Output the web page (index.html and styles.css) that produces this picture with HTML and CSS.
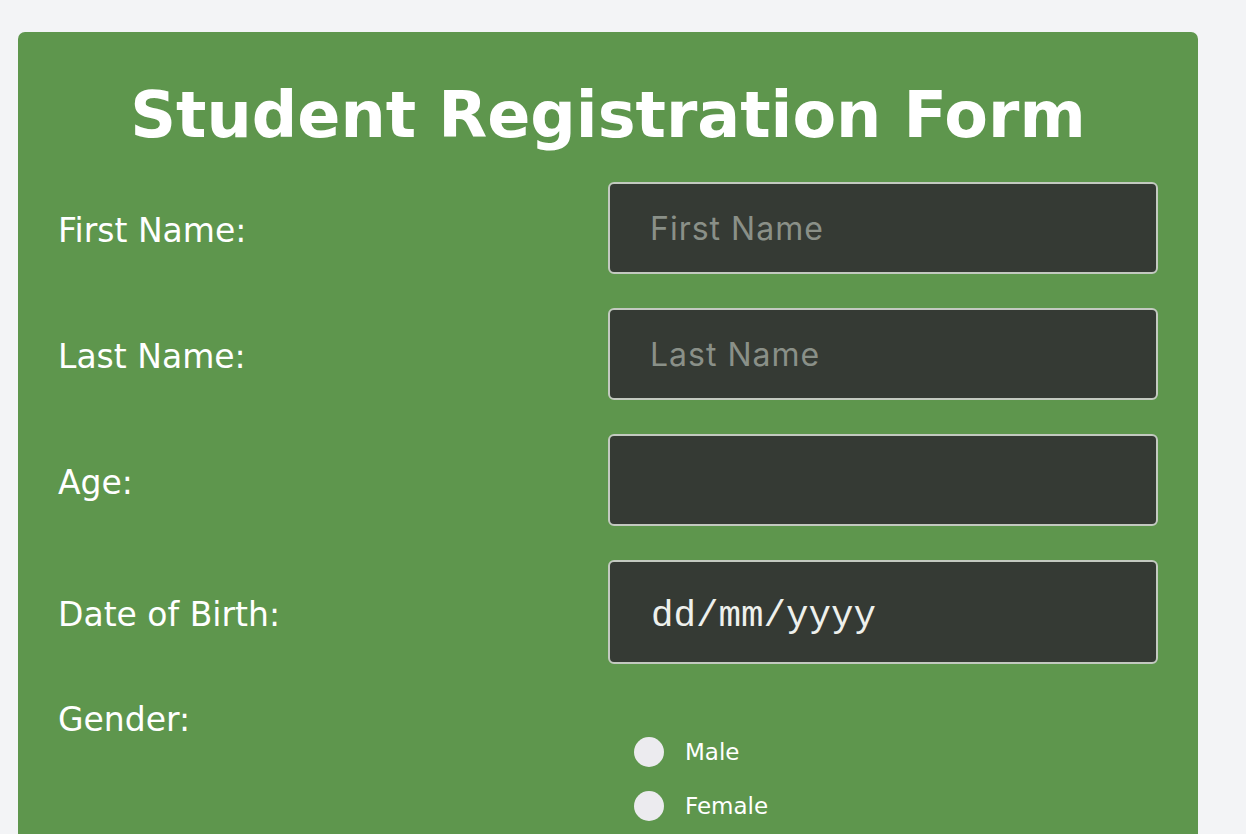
FILE: index.html
```html
<!DOCTYPE html>
<html lang="en">
<head>
<meta charset="utf-8">
<title>Student Registration Form</title>
<link rel="stylesheet" href="styles.css">
</head>
<body>
  <form class="card">
    <h1 class="title">Student Registration Form</h1>
    <div class="grid">
      <label class="label" for="fn">First Name:</label>
      <input class="field" id="fn" type="text" placeholder="First Name">

      <label class="label" for="ln">Last Name:</label>
      <input class="field" id="ln" type="text" placeholder="Last Name">

      <label class="label" for="age">Age:</label>
      <input class="field" id="age" type="text">

      <label class="label" for="dob">Date of Birth:</label>
      <input class="field field-date" id="dob" type="text" value="dd/mm/yyyy">

      <span class="label label-top">Gender:</span>
      <div class="radios">
        <label class="radio"><input type="radio" name="g" class="dot"><span>Male</span></label>
        <label class="radio"><input type="radio" name="g" class="dot"><span>Female</span></label>
      </div>
    </div>
  </form>
</body>
</html>
```
FILE: styles.css
```css
html, body {
  margin: 0;
  padding: 0;
  background: #f3f4f6;
}
body {
  padding: 32px 18px 0;
  font-family: "DejaVu Sans", Verdana, sans-serif;
}
.card {
  width: 1180px;
  box-sizing: border-box;
  background: #5e964d;
  border-radius: 7px;
  padding: 45px 40px 40px;
  color: #ffffff;
}
.title {
  margin: 0 0 29px;
  text-align: center;
  font-size: 63.6px;
  line-height: 76px;
  font-weight: bold;
}
.grid {
  display: grid;
  grid-template-columns: 1fr 1fr;
  row-gap: 34px;
  align-items: center;
}
.label {
  font-size: 33px;
  line-height: 40px;
  padding-top: 6px;
  color: #ffffff;
}
.label-top {
  align-self: start;
  padding-top: 2px;
}
.field {
  box-sizing: border-box;
  width: 100%;
  height: 92px;
  margin: 0;
  background: #353a34;
  border: 2px solid #c3c9c0;
  border-radius: 6px;
  padding: 0 40px;
  font-family: Inter, "Noto Sans", sans-serif;
  font-size: 32px;
  letter-spacing: 1px;
  color: #e8ece6;
  outline: none;
}
.field::placeholder {
  color: #8a9088;
}
.field-date {
  height: 104px;
  font-family: "Liberation Mono", "Courier New", monospace;
  font-size: 37.5px;
  letter-spacing: 0;
  color: #eef0ec;
  padding-left: 41px;
  padding-top: 7px;
}
.radios {
  display: flex;
  flex-direction: column;
  gap: 24px;
  padding-top: 39px;
  padding-left: 26px;
}
.radio {
  display: flex;
  align-items: center;
  gap: 21px;
  font-size: 23px;
  line-height: 30px;
  color: #ffffff;
}
.dot {
  appearance: none;
  -webkit-appearance: none;
  width: 30px;
  height: 30px;
  margin: 0;
  border-radius: 50%;
  background: #ecebef;
  border: none;
}
```
